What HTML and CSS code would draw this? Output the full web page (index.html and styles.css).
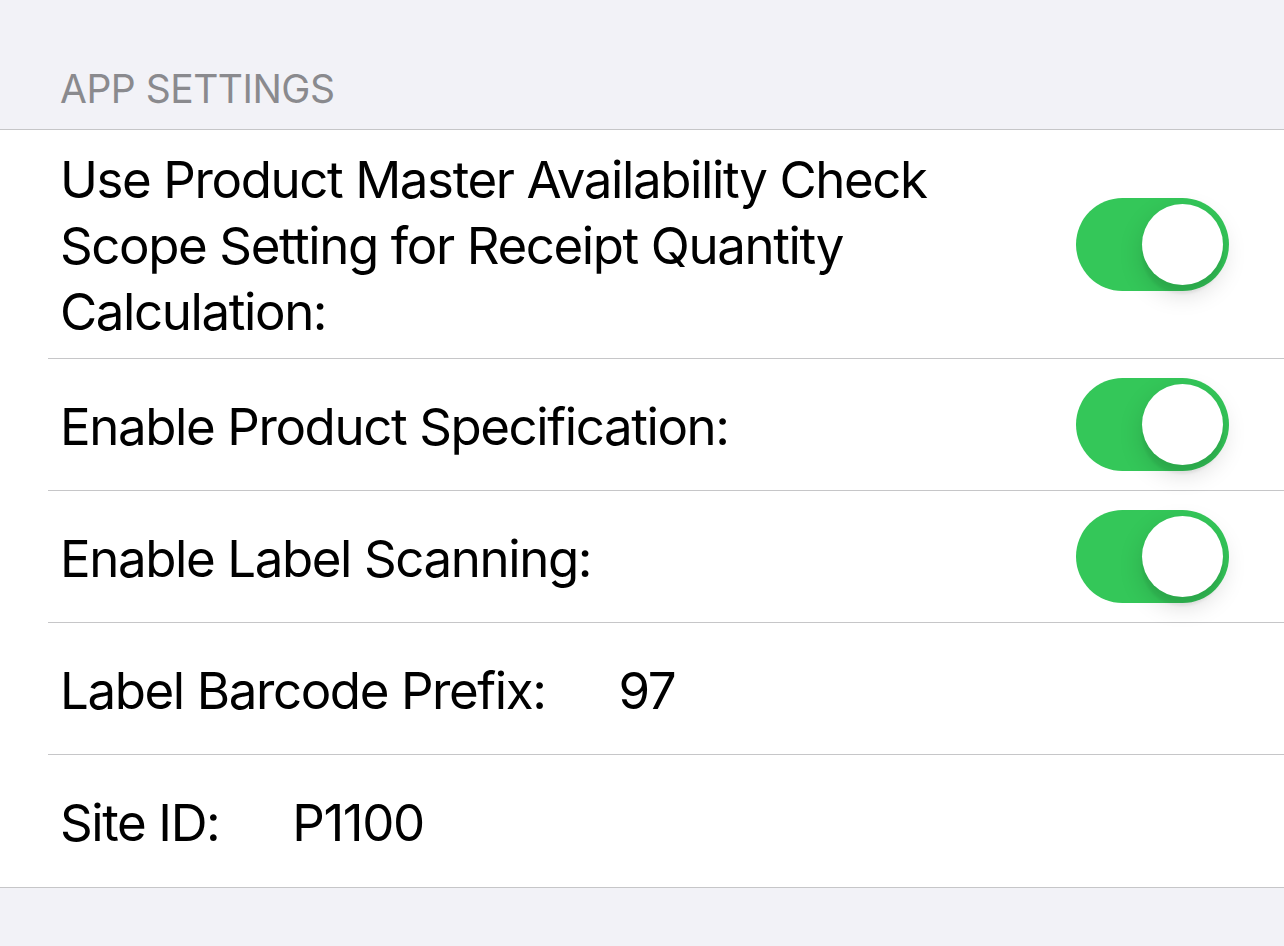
FILE: index.html
```html
<!DOCTYPE html>
<html>
<head>
<meta charset="utf-8">
<link rel="stylesheet" href="styles.css">
</head>
<body>
<div class="screen">
  <div class="section-header">APP SETTINGS</div>
  <div class="list">
    <div class="row">
      <div class="row-inner">
        <div class="label multi">Use Product Master Availability Check<br>Scope Setting for Receipt Quantity<br>Calculation:</div>
        <div class="switch on"><span class="knob"></span></div>
      </div>
    </div>
    <div class="row">
      <div class="row-inner">
        <div class="label">Enable Product Specification:</div>
        <div class="switch on"><span class="knob"></span></div>
      </div>
    </div>
    <div class="row">
      <div class="row-inner">
        <div class="label">Enable Label Scanning:</div>
        <div class="switch on"><span class="knob"></span></div>
      </div>
    </div>
    <div class="row">
      <div class="row-inner">
        <div class="label">Label Barcode Prefix:</div>
        <div class="value">97</div>
      </div>
    </div>
    <div class="row last">
      <div class="row-inner">
        <div class="label">Site ID:</div>
        <div class="value">P1100</div>
      </div>
    </div>
  </div>
</div>
</body>
</html>
```
FILE: styles.css
```css
html, body {
  margin: 0;
  padding: 0;
  background: #f2f2f7;
}
body {
  font-family: Inter, "Noto Sans", "Liberation Sans", sans-serif;
  color: #000;
  width: 1284px;
  height: 946px;
  overflow: hidden;
}
.screen {
  display: flex;
  flex-direction: column;
}
.section-header {
  height: 129px;
  box-sizing: border-box;
  padding: 66px 0 0 60px;
  font-size: 39px;
  line-height: 46px;
  color: #8a8a8e;
  letter-spacing: -0.5px;
}
.list {
  background: #fff;
  border-top: 1px solid #c6c6c8;
  border-bottom: 1px solid #c6c6c8;
}
.row {
  padding-left: 48px;
}
.row-inner {
  display: flex;
  align-items: center;
  min-height: 132px;
  box-sizing: border-box;
  padding: 17px 55px 13px 12px;
  border-bottom: 1px solid #c6c6c8;
}
.row.last .row-inner {
  border-bottom: none;
}
.label {
  font-size: 51px;
  line-height: 66px;
  letter-spacing: -1.4px;
  flex: 0 1 auto;
}
.label.multi {
  flex: 1 1 auto;
}
.value {
  font-size: 51px;
  line-height: 66px;
  letter-spacing: -1.4px;
  margin-left: 73px;
}
.switch {
  margin-left: auto;
  align-self: center;
  width: 153px;
  height: 93px;
  border-radius: 47px;
  background: #34c759;
  position: relative;
  flex: 0 0 auto;
  margin-top: -4px;
}
.switch .knob {
  position: absolute;
  top: 6px;
  right: 6px;
  width: 81px;
  height: 81px;
  border-radius: 50%;
  background: #fff;
  box-shadow: 0 9px 24px rgba(0, 0, 0, 0.15), 0 9px 3px rgba(0, 0, 0, 0.06);
}
```
